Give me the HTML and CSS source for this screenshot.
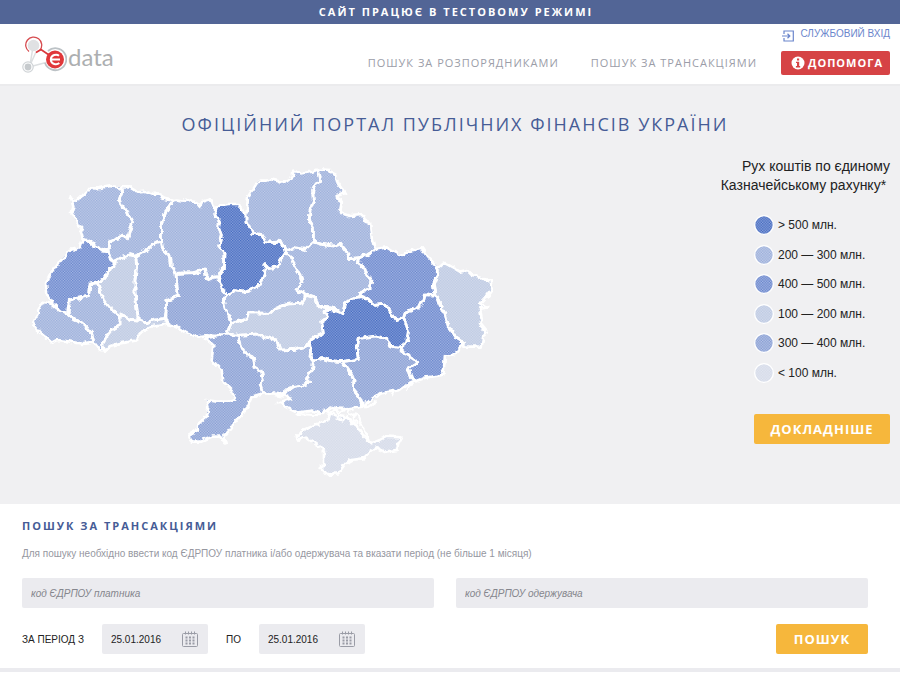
FILE: index.html
```html
<!DOCTYPE html>
<html lang="uk">
<head>
<meta charset="utf-8">
<meta name="viewport" content="width=device-width, initial-scale=1">
<title>Офіційний портал публічних фінансів України</title>
<link rel="stylesheet" href="styles.css">
</head>
<body>
<div class="notice">Сайт працює в тестовому режимі</div>

<header class="header">
  <a class="logo" href="#" aria-label="Є data">
    <svg class="logo-mark" viewBox="0 0 45 38" width="45" height="38" aria-hidden="true">
      <path d="M10.500 14 L8.500 26 M14 16 L9 27 M9 30.500 L24 26.500" fill="none" stroke="#dcdfe1" stroke-width="1.500"/>
      <circle cx="11.500" cy="9.500" r="5.800" fill="#e0e1e3"/>
      <path d="M7 15.500 A8 8 0 1 1 18 14" fill="none" stroke="#d64b4f" stroke-width="1.300"/>
      <path d="M14 16.500 L19 13.500 L27 19" fill="none" stroke="#d9383c" stroke-width="1.700"/>
      <circle cx="6" cy="31" r="5.200" fill="#fff" stroke="#d0d4d7" stroke-width="1.200"/>
      <circle cx="6" cy="31" r="3.400" fill="#c6cacd"/>
      <path d="M26 15 A11 11 0 1 1 23 27" fill="none" stroke="#bcc2c6" stroke-width="1.800"/>
      <circle cx="33" cy="23.500" r="9" fill="#e0373a"/>
      <path d="M37 19.700 C35 18 29 18.300 28.800 23.500 C29 28.700 35 29 37.300 27 M29 23.500 H38" fill="none" stroke="#fff" stroke-width="2"/>
    </svg>
    <span class="logo-text">data</span>
  </a>
  <nav class="nav">
    <a href="#">Пошук за розпорядниками</a>
    <a href="#">Пошук за трансакціями</a>
  </nav>
  <div class="account">
    <a class="login" href="#">
      <svg viewBox="0 0 12 12" width="12" height="12" aria-hidden="true">
        <path d="M2 4 V1 H11.300 V11 H2 V8 M0 6 H7.500 M5.500 3.800 L7.800 6 L5.500 8.200" fill="none" stroke="#6b86cc" stroke-width="1.200"/>
      </svg>
      Службовий вхід
    </a>
    <a class="help" href="#">
      <svg viewBox="0 0 14 14" width="14" height="14" aria-hidden="true">
        <circle cx="7" cy="7" r="6.500" fill="#fff"/>
        <path d="M6 2.500 h2.200 v2 h-2.200z M5 5.700 h3.200 v4.300 h1 v1.400 h-4.300 v-1.400 h1.100 v-2.900 h-1z" fill="#d64345"/>
      </svg>
      Допомога
    </a>
  </div>
</header>

<main>
  <section class="hero">
    <h1 class="hero-title">Офіційний портал публічних фінансів України</h1>
    <div class="hero-body">
      <svg class="map" viewBox="60 480 1440 960" role="img" aria-label="Мапа областей України">
        <defs>
          <pattern id="p5" width="8" height="8" patternUnits="userSpaceOnUse"><path class="b5" d="M0 0h8v8h-8z"/><path class="d5" d="M0 0h4v4h-4zM4 4h4v4h-4z"/></pattern>
          <pattern id="p4" width="8" height="8" patternUnits="userSpaceOnUse"><path class="b4" d="M0 0h8v8h-8z"/><path class="d4" d="M0 0h4v4h-4zM4 4h4v4h-4z"/></pattern>
          <pattern id="p3" width="8" height="8" patternUnits="userSpaceOnUse"><path class="b3" d="M0 0h8v8h-8z"/><path class="d3" d="M0 0h4v4h-4zM4 4h4v4h-4z"/></pattern>
          <pattern id="p2" width="8" height="8" patternUnits="userSpaceOnUse"><path class="b2" d="M0 0h8v8h-8z"/><path class="d2" d="M0 0h4v4h-4zM4 4h4v4h-4z"/></pattern>
          <pattern id="p1" width="8" height="8" patternUnits="userSpaceOnUse"><path class="b1" d="M0 0h8v8h-8z"/><path class="d1" d="M0 0h4v4h-4zM4 4h4v4h-4z"/></pattern>
          <pattern id="p0" width="8" height="8" patternUnits="userSpaceOnUse"><path class="b0" d="M0 0h8v8h-8z"/><path class="d0" d="M0 0h4v4h-4zM4 4h4v4h-4z"/></pattern>
          <filter id="rough" x="-2%" y="-2%" width="104%" height="104%" color-interpolation-filters="sRGB">
            <feTurbulence type="fractalNoise" baseFrequency="0.06" numOctaves="2" seed="4" result="n"/>
            <feDisplacementMap in="SourceGraphic" in2="n" scale="16" xChannelSelector="R" yChannelSelector="G"/>
          </filter>
          <g id="regions">
            <path fill="url(#p2)" d="M212 592 225 602 240 590 260 578 268 566 300 564 330 558 362 562 365 580 358 598 364 618 380 630 386 645 398 665 392 685 382 715 368 705 350 718 328 725 324 752 308 750 285 738 270 724 248 716 242 692 248 686 236 680 228 660 216 635 220 620Z"/>
            <path fill="url(#p2)" d="M362 562 390 562 410 575 435 572 460 582 480 580 485 595 518 602 500 630 484 670 484 722 465 728 440 750 410 768 390 764 360 774 342 784 330 770 324 752 328 725 350 718 368 705 382 715 392 685 398 665 386 645 380 630 364 618 358 598 365 580Z"/>
            <path fill="url(#p2)" d="M518 604 530 602 550 605 558 596 570 604 590 606 600 618 606 606 632 598 640 615 646 632 644 640 646 648 658 662 656 685 664 705 656 740 672 760 670 805 656 830 640 832 622 840 614 810 580 818 528 820 514 800 512 770 488 748 484 722 484 670 500 630Z"/>
            <path fill="url(#p5)" d="M646 632 660 616 685 612 718 612 725 630 738 645 738 668 750 678 758 700 785 704 795 725 830 728 840 718 850 738 856 760 842 780 835 800 808 805 798 794 792 825 780 855 750 868 730 876 700 872 682 885 668 870 658 845 656 830 670 805 672 760 656 740 664 705 656 685 658 662 646 648 644 640Z"/>
            <path fill="url(#p2)" d="M740 640 744 590 770 550 778 542 800 542 815 538 840 544 860 544 878 530 880 512 905 520 940 514 955 508 962 542 945 552 938 570 940 605 930 630 928 660 940 680 940 725 915 748 880 743 858 752 850 738 840 718 830 728 795 725 785 704 758 700 750 678 738 668 738 645Z"/>
            <path fill="url(#p2)" d="M955 508 990 510 1005 525 1015 550 1035 580 1010 588 1025 610 1020 638 1050 648 1090 645 1098 665 1110 670 1115 715 1125 748 1110 760 1080 772 1048 776 1040 755 1022 732 1000 738 970 734 940 725 940 680 928 660 930 630 940 605 938 570 945 552 962 542Z"/>
            <path fill="url(#p2)" d="M940 725 970 734 1000 738 1022 732 1040 755 1048 776 1078 776 1075 792 1095 805 1100 825 1116 840 1110 865 1082 878 1080 890 1055 895 1035 910 1028 940 1015 935 995 920 955 918 945 890 915 882 888 870 906 845 900 825 885 800 875 775 856 760 858 752 880 743 915 748Z"/>
            <path fill="url(#p4)" d="M1125 748 1160 742 1180 755 1205 768 1220 755 1265 744 1282 770 1310 798 1312 825 1300 855 1305 885 1275 885 1270 905 1250 925 1215 940 1210 955 1188 962 1175 940 1155 912 1125 916 1095 892 1080 888 1082 878 1110 865 1116 840 1100 825 1095 805 1075 792 1078 776 1110 760Z"/>
            <path fill="url(#p1)" d="M1312 805 1330 788 1345 795 1380 815 1400 810 1415 825 1440 830 1455 842 1472 842 1475 870 1460 890 1440 912 1465 922 1440 925 1445 955 1440 970 1460 995 1450 1010 1445 1040 1390 1040 1390 1028 1370 1015 1360 1000 1345 980 1335 940 1320 915 1312 890 1305 885 1300 855 1312 825Z"/>
            <path fill="url(#p4)" d="M1305 885 1312 890 1320 915 1335 940 1345 980 1360 1000 1370 1015 1390 1028 1380 1042 1365 1062 1335 1068 1330 1125 1280 1132 1245 1145 1235 1135 1225 1105 1250 1090 1245 1080 1215 1060 1200 1042 1220 1025 1225 995 1218 970 1210 955 1215 940 1250 925 1270 905 1275 885Z"/>
            <path fill="url(#p5)" d="M1028 940 1035 910 1055 895 1080 890 1095 892 1125 916 1155 912 1175 940 1188 962 1210 955 1218 970 1225 995 1220 1025 1200 1042 1170 1038 1160 1015 1125 1008 1075 1015 1070 1040 1075 1078 1025 1085 990 1082 970 1075 945 1080 930 1072 932 1050 928 1025 950 1010 970 1000 965 965 985 950 975 938 985 928 1015 935Z"/>
            <path fill="url(#p1)" d="M680 1002 692 972 740 955 745 938 810 940 825 925 865 912 905 910 915 895 915 882 945 890 955 918 985 925 975 938 985 950 965 965 970 1000 930 1020 925 1035 885 1048 840 1050 830 1020 785 1008 770 1002 715 1006Z"/>
            <path fill="url(#p2)" d="M682 885 700 872 730 876 750 868 780 855 792 825 798 794 808 805 835 800 842 780 856 760 875 775 885 800 900 825 906 845 888 870 915 882 915 895 905 910 865 912 825 925 810 940 745 938 740 955 692 972 688 950 675 925 670 900Z"/>
            <path fill="url(#p3)" d="M528 820 580 818 614 810 622 840 640 832 656 830 658 845 668 870 682 885 670 900 675 925 688 950 692 972 680 1002 650 1008 620 1006 585 1010 560 1000 530 980 505 972 498 950 500 905 535 888 530 850Z"/>
            <path fill="url(#p2)" d="M484 722 488 748 512 770 514 800 528 820 530 850 535 888 500 900 498 930 495 955 460 960 440 968 415 960 410 920 405 880 405 840 410 800 407 770 440 750 465 728Z"/>
            <path fill="url(#p1)" d="M342 784 360 774 390 764 407 770 410 800 405 840 405 880 410 920 415 960 390 958 360 945 330 925 310 900 300 870 292 848 315 835 325 810 342 800Z"/>
            <path fill="url(#p4)" d="M248 718 240 742 210 750 180 785 150 825 138 850 142 885 158 910 180 932 202 940 208 900 230 895 265 888 270 852 292 848 315 835 325 810 342 800 332 775 324 752 308 750 285 738 270 724Z"/>
            <path fill="url(#p2)" d="M130 905 155 912 180 932 205 942 225 960 245 968 260 982 275 1000 282 1028 250 1032 210 1025 170 1020 155 1028 135 1010 120 998 98 970 110 950 115 930Z"/>
            <path fill="url(#p2)" d="M208 900 230 895 265 888 270 852 292 848 300 870 310 900 330 925 360 945 360 975 335 988 318 1010 308 1035 315 1052 300 1050 282 1028 275 1000 260 982 245 968 225 960 205 942Z"/>
            <path fill="url(#p1)" d="M360 945 390 958 415 960 440 968 460 960 495 955 503 970 450 980 420 1000 405 1022 360 1030 330 1038 315 1055 308 1035 318 1010 335 990 360 975Z"/>
            <path fill="url(#p3)" d="M615 1015 640 1010 680 1002 715 1006 725 1040 735 1060 760 1070 765 1102 785 1115 790 1140 780 1150 788 1180 755 1190 745 1215 720 1250 680 1300 670 1305 677 1330 660 1310 635 1310 600 1325 575 1325 565 1305 590 1290 590 1275 620 1250 625 1220 620 1200 650 1205 690 1205 705 1200 695 1170 670 1145 665 1110 635 1080 640 1035Z"/>
            <path fill="url(#p2)" d="M715 1006 770 1002 785 1008 830 1020 840 1050 885 1048 925 1035 928 1025 932 1050 930 1072 940 1085 938 1105 920 1130 930 1145 910 1155 880 1160 855 1175 850 1185 820 1180 788 1180 780 1150 790 1140 785 1115 765 1102 760 1070 735 1060 725 1040Z"/>
            <path fill="url(#p2)" d="M945 1080 970 1075 990 1082 1025 1085 1045 1110 1062 1140 1060 1170 1080 1195 1085 1220 1045 1228 1010 1225 990 1220 965 1242 940 1232 890 1238 855 1220 845 1205 875 1195 850 1180 870 1160 910 1155 930 1145 920 1130 938 1105 940 1085Z"/>
            <path fill="url(#p3)" d="M1075 1015 1125 1008 1160 1015 1170 1038 1200 1042 1215 1060 1245 1080 1250 1090 1225 1105 1235 1135 1245 1145 1220 1155 1200 1170 1175 1175 1140 1180 1115 1200 1090 1220 1082 1195 1060 1170 1062 1140 1045 1110 1025 1085 1075 1078 1070 1040Z"/>
            <path fill="url(#p0)" d="M985 1260 990 1240 1015 1248 1040 1252 1065 1270 1085 1300 1115 1330 1140 1320 1160 1310 1205 1312 1195 1330 1190 1350 1155 1355 1130 1342 1105 1360 1090 1375 1055 1380 1035 1392 1015 1420 980 1422 962 1402 972 1398 972 1350 950 1335 915 1310 895 1320 890 1310 915 1288 950 1272Z"/>
          </g>
        </defs>
        <use href="#regions"/>
        <g class="borders" filter="url(#rough)">
          <use href="#regions"/>
          <path class="coast" d="M975 1228 990 1238 1005 1228 1020 1240 1038 1228 1050 1245 1068 1240 1060 1258 1075 1268M1010 1252 1028 1262 1040 1250 1058 1272M1085 1222 1105 1222 1130 1205M1070 1240 1085 1275 1110 1322M820 1186 850 1190M830 1208 850 1206M1175 1188 1182 1174M1220 1172 1228 1155M1095 1200 1097 1222M890 1242 930 1244 960 1246"/>
        </g>
      </svg>
      <aside class="legend">
        <h2 class="legend-title">Рух коштів по єдиному<br>Казначейському рахунку*&nbsp;</h2>
        <ul class="legend-list">
          <li><svg class="dot" viewBox="0 0 60 60" aria-hidden="true"><circle cx="30" cy="30" r="28" fill="url(#p5)"/></svg>&gt; 500 млн.</li>
          <li><svg class="dot" viewBox="0 0 60 60" aria-hidden="true"><circle cx="30" cy="30" r="28" fill="url(#p2)"/></svg>200 — 300 млн.</li>
          <li><svg class="dot" viewBox="0 0 60 60" aria-hidden="true"><circle cx="30" cy="30" r="28" fill="url(#p4)"/></svg>400 — 500 млн.</li>
          <li><svg class="dot" viewBox="0 0 60 60" aria-hidden="true"><circle cx="30" cy="30" r="28" fill="url(#p1)"/></svg>100 — 200 млн.</li>
          <li><svg class="dot" viewBox="0 0 60 60" aria-hidden="true"><circle cx="30" cy="30" r="28" fill="url(#p3)"/></svg>300 — 400 млн.</li>
          <li><svg class="dot" viewBox="0 0 60 60" aria-hidden="true"><circle cx="30" cy="30" r="28" fill="url(#p0)"/></svg>&lt; 100 млн.</li>
        </ul>
        <a class="button more" href="#">Докладніше</a>
      </aside>
    </div>
  </section>

  <section class="search">
    <h2 class="search-title">Пошук за трансакціями</h2>
    <p class="hint">Для пошуку необхідно ввести код ЄДРПОУ платника і/або одержувача та вказати період (не більше 1 місяця)</p>
    <form>
      <div class="codes">
        <input class="field" type="text" placeholder="код ЄДРПОУ платника" aria-label="код ЄДРПОУ платника">
        <input class="field" type="text" placeholder="код ЄДРПОУ одержувача" aria-label="код ЄДРПОУ одержувача">
      </div>
      <div class="period">
        <label for="from">ЗА ПЕРІОД З</label>
        <div class="date">
          <input id="from" type="text" value="25.01.2016">
          <svg viewBox="0 0 16 16" width="16" height="16" aria-hidden="true"><use href="#calendar"/></svg>
        </div>
        <label for="to">ПО</label>
        <div class="date">
          <input id="to" type="text" value="25.01.2016">
          <svg viewBox="0 0 16 16" width="16" height="16" aria-hidden="true">
            <g id="calendar" fill="none" stroke="#9a9ca6">
              <rect x="0.500" y="2.500" width="15" height="13" rx="1"/>
              <path d="M3.500 0.500v3M6.500 0.500v3M9.500 0.500v3M12.500 0.500v3"/>
              <path d="M3.500 6.500h9M3.500 9.500h9M3.500 12.500h9" stroke-width="2" stroke-dasharray="2 1.500"/>
            </g>
          </svg>
        </div>
        <button class="button submit" type="submit">Пошук</button>
      </div>
    </form>
  </section>
</main>
<footer class="footer"></footer>
</body>
</html>
```
FILE: styles.css
```css
* { box-sizing: border-box; }

body {
  margin: 0;
  background: #fff;
  color: #222;
  font-family: "Liberation Sans", Arial, sans-serif;
  font-size: 12px;
}

a { text-decoration: none; }

.notice {
  height: 24px;
  background: #526596;
  color: #fff;
  font: 700 11px/24px "Open Sans", sans-serif;
  letter-spacing: 2px;
  text-align: center;
  text-transform: uppercase;
  padding-left: 12px;
}

.header {
  display: flex;
  align-items: flex-start;
  height: 62px;
  padding: 0 10px 0 22px;
  border-bottom: 2px solid #ebebed;
}

.logo {
  display: flex;
  align-items: flex-start;
  gap: 1px;
  margin-right: auto;
  padding-top: 12px;
}

.logo-text {
  color: #adafb1;
  font: 400 24px/24px Lato, sans-serif;
  padding-top: 9px;
}

.nav {
  display: flex;
  gap: 32px;
  padding-top: 30px;
  margin-right: 24px;
}

.nav a {
  color: #9b9da8;
  font: 400 11px/18px "Open Sans", sans-serif;
  letter-spacing: 1px;
  text-transform: uppercase;
}

.account {
  display: flex;
  flex-direction: column;
  align-items: flex-end;
  gap: 8px;
}

.login {
  display: flex;
  gap: 6px;
  color: #6b86cc;
  font: 400 10px/19px "Liberation Sans", sans-serif;
  text-transform: uppercase;
}

.login svg { margin-top: 6px; }

.help {
  display: flex;
  align-items: center;
  gap: 3px;
  height: 24px;
  padding: 0 7px 0 10px;
  border-radius: 2px;
  background: #d64345;
  color: #fff;
  font: 700 11px/24px "Open Sans", sans-serif;
  letter-spacing: 1px;
  text-transform: uppercase;
}

.hero {
  background: #f0f0f2;
  padding: 25px 10px 24px 20px;
}

.hero-title {
  margin: 0;
  color: #465c96;
  font: 500 18px/26px "Open Sans", sans-serif;
  letter-spacing: 2px;
  text-align: center;
  text-transform: uppercase;
}

.hero-body {
  display: flex;
  justify-content: space-between;
  align-items: flex-start;
  padding-top: 20px;
}

.map {
  flex: 1 1 auto;
  min-width: 0;
  max-width: 480px;
  margin-top: 3px;
}

.borders { fill-opacity: 0; stroke: #fff; stroke-width: 8; stroke-linejoin: round; }
.coast { stroke-width: 6; }

.b5 { fill: #8ba3dc; } .d5 { fill: #4469be; }
.b4 { fill: #a5b7e4; } .d4 { fill: #6884ca; }
.b3 { fill: #b7c5e6; } .d3 { fill: #869cd2; }
.b2 { fill: #c1cde8; } .d2 { fill: #9aadda; }
.b1 { fill: #d3dbec; } .d1 { fill: #bdc9e2; }
.b0 { fill: #e2e6f0; } .d0 { fill: #d5dbe9; }

.legend {
  display: flex;
  flex-direction: column;
  align-items: flex-end;
}

.legend-title {
  margin: 0;
  font-size: 14px;
  line-height: 19px;
  font-weight: 400;
  text-align: right;
}

.legend-list {
  display: grid;
  align-content: space-between;
  list-style: none;
  width: 136px;
  height: 168px;
  margin: 20px 0 0;
  padding: 0;
}

.legend-list li {
  display: flex;
  align-items: center;
  gap: 4px;
  line-height: 20px;
}

.dot { width: 20px; height: 20px; }
.dot circle { stroke: #fff; stroke-width: 4; }

.button {
  border: 0;
  border-radius: 2px;
  background: #f6b73c;
  color: #fff;
  font: 700 13px/30px "Open Sans", sans-serif;
  letter-spacing: 1px;
  text-align: center;
  text-transform: uppercase;
}

.more { width: 136px; margin-top: 31px; }

.search { padding: 12px 32px 14px 22px; }

.search-title {
  margin: 0;
  color: #465c96;
  font: 700 11px/20px "Open Sans", sans-serif;
  letter-spacing: 2px;
  text-transform: uppercase;
}

.hint {
  margin: 10px 0 16px;
  color: #96979f;
  font-size: 10px;
  line-height: 16px;
}

.codes {
  display: grid;
  grid-template-columns: 1fr 1fr;
  gap: 22px;
}

.field {
  height: 30px;
  min-width: 0;
  padding: 0 9px;
  border: 0;
  border-radius: 2px;
  background: #ebebef;
  font: 10px "Liberation Sans", sans-serif;
}

.field::placeholder { color: #85868d; font-style: italic; }

.period {
  display: flex;
  align-items: center;
  gap: 18px;
  margin-top: 16px;
  font-size: 10px;
}

.date {
  display: flex;
  align-items: center;
  justify-content: space-between;
  width: 106px;
  height: 30px;
  padding: 0 10px 0 9px;
  border-radius: 2px;
  background: #ebebef;
}

.date input {
  width: 60px;
  padding: 0;
  border: 0;
  background: none;
  color: #222;
  font: 10px "Liberation Sans", sans-serif;
}

.submit { width: 92px; height: 30px; padding: 0; margin-left: auto; }

.footer { height: 4px; background: #ebebef; }
```
